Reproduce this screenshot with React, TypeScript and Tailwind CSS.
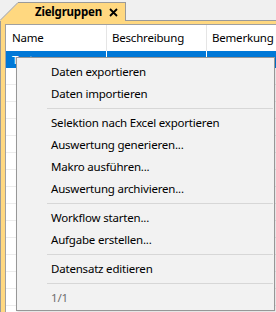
import React from "react";

const items: (string | null)[] = [
  "Daten exportieren",
  "Daten importieren",
  null,
  "Selektion nach Excel exportieren",
  "Auswertung generieren...",
  "Makro ausführen...",
  "Auswertung archivieren...",
  null,
  "Workflow starten...",
  "Aufgabe erstellen...",
  null,
  "Datensatz editieren",
  null,
];

const ContextMenu = () => {
  return (
    <div className="absolute left-[16px] top-[57px] w-[259px] border border-[#979797] bg-[#f2f2f2] pt-[3px] pb-[1px] shadow-[1px_1px_2px_rgba(0,0,0,0.15)]">
      {items.map((label, i) =>
        label === null ? (
          <div key={i} className="h-[7px] pt-[3px]">
            <div className="ml-[30px] mr-[1px] h-px bg-[#d7d7d7]" />
          </div>
        ) : (
          <div key={i} className="flex h-[22px] items-center pl-[34px] text-black">
            {label}
          </div>
        )
      )}
      <div className="flex h-[22px] items-center pl-[34px] text-[#6d6d6d]">1/1</div>
    </div>
  );
};

const App = () => {
  const rows = Array.from({ length: 16 });
  return (
    <div className="relative h-[312px] w-[276px] overflow-hidden bg-[#f0f0f0] font-['Noto_Sans',sans-serif] text-[11.5px] leading-none tracking-[-0.2px]">
      {/* Tab bar */}
      <div className="flex h-[21px] items-end">
        <svg width="21" height="19" viewBox="0 0 21 19" className="block">
          <polygon points="0,19 18,1 21,1 21,19" fill="#ffd880" />
          <line x1="0" y1="18.5" x2="18" y2="0.5" stroke="#9a9a9a" strokeWidth="1" />
          <line x1="18" y1="0.5" x2="21" y2="0.5" stroke="#9a9a9a" strokeWidth="1" />
        </svg>
        <div className="flex h-[19px] w-[105px] items-center border-t border-r border-[#9a9a9a] bg-[#ffd880] pl-[14px]">
          <span className="w-[62px] font-bold text-black">Zielgruppen</span>
          <svg width="9" height="9" viewBox="0 0 9 9" className="ml-[12px]">
            <path d="M1 1 L8 8 M8 1 L1 8" stroke="#000" strokeWidth="1.8" />
          </svg>
        </div>
        <div className="h-full flex-1 border-b border-[#9a9a9a]" />
      </div>

      {/* Tab page frame */}
      <div className="h-[291px] border-l border-[#9a9a9a] bg-[#ffd880] pl-[4px] pt-[3px]">
        <div className="h-full border-l border-t border-[#a0a0a0] bg-white">
          {/* Header */}
          <div className="flex h-[26px] text-black">
            <div className="flex w-[101px] items-center border-r border-[#e5e5e5] pl-[6px]">Name</div>
            <div className="flex w-[100px] items-center border-r border-[#e5e5e5] pl-[5px]">Beschreibung</div>
            <div className="flex flex-1 items-center pl-[5px]">Bemerkung</div>
          </div>
          {/* Rows */}
          <div className="flex h-[17px] bg-[#0078d7] text-white">
            <div className="flex w-[101px] items-center border-r border-white pl-[6px]">Test</div>
            <div className="w-[100px] border-r border-white" />
            <div className="flex-1" />
          </div>
          {rows.map((_, i) => (
            <div key={i} className="h-[17px] border-b border-[#ececec]" />
          ))}
        </div>
      </div>

      <ContextMenu />
    </div>
  );
};

export default App;
